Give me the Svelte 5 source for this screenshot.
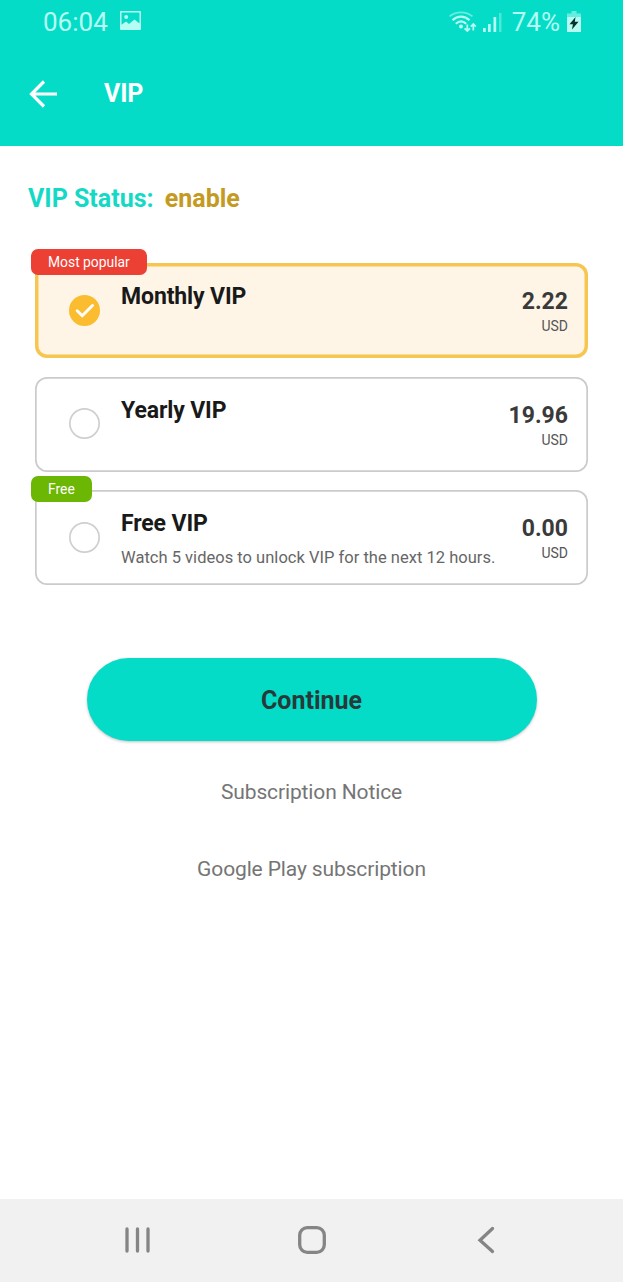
<script lang="ts">
	interface Plan {
		id: string;
		name: string;
		price: string;
		note?: string;
		badge?: string;
		badgeColor?: 'red' | 'green';
	}

	const plans: Plan[] = [
		{ id: 'monthly', name: 'Monthly VIP', price: '2.22', badge: 'Most popular', badgeColor: 'red' },
		{ id: 'yearly', name: 'Yearly VIP', price: '19.96' },
		{
			id: 'free',
			name: 'Free VIP',
			price: '0.00',
			note: 'Watch 5 videos to unlock VIP for the next 12 hours.',
			badge: 'Free',
			badgeColor: 'green'
		}
	];

	let selected = $state('monthly');
</script>

<div class="screen">
	<header>
		<div class="status-bar">
			<span class="clock">06:04</span>
			<svg class="picture" width="21" height="19" viewBox="0 0 21 19">
				<path
					fill="currentColor"
					fill-rule="evenodd"
					d="M1 0h19a1 1 0 0 1 1 1v17a1 1 0 0 1-1 1H1a1 1 0 0 1-1-1V1a1 1 0 0 1 1-1zM1.5 1.5v12.3L6 10.5l3 2.4 5.5-4.4 5 4V1.5z"
				/>
				<circle cx="6.2" cy="6" r="2" fill="currentColor" />
			</svg>
			<div class="indicators">
				<svg width="28" height="22" viewBox="0 0 28 22" fill="none" stroke="currentColor">
					<path d="M.5 5.4C7 0 17 0 23.500 5.400" stroke-width="1.8" opacity=".55" />
					<path d="M3.5 9.2c5-4.800 12-4.800 17 0" stroke-width="2.2" />
					<path d="M6.8 12.8c3.200-3 7.200-3 10.400 0" stroke-width="2.2" />
					<circle cx="12" cy="15.6" r="2" fill="currentColor" stroke="none" />
					<path
						d="M18.3 13.5V20m-2.700-2.700 2.700 2.700 2.700-2.700M24.300 19.500V13m-2.500 2.700 2.500-2.700 2.500 2.700"
						stroke-width="1.8"
					/>
				</svg>
				<svg class="signal" width="19" height="20" viewBox="0 0 19 20" fill="currentColor">
					<rect x="0" y="16" width="2.7" height="4" />
					<rect x="5" y="12" width="2.7" height="8" />
					<rect x="10.5" y="5" width="2.7" height="15" />
					<rect x="16" y="1" width="2.5" height="19" opacity=".4" />
				</svg>
				<span class="percent">74%</span>
				<svg width="14" height="21" viewBox="0 0 14 21">
					<path d="M4.5 0h5v2.5H14V8H0V2.5h4.5z" fill="currentColor" opacity=".55" />
					<path d="M0 6h14v15H0z" fill="currentColor" />
					<path d="M8.5 6 2.5 13.2h3.4L5 18.5l6.5-7.7H7.8z" fill="#07332f" />
				</svg>
			</div>
		</div>
		<div class="toolbar">
			<svg width="29" height="28" viewBox="0 0 29 28" fill="none" stroke="#fff" stroke-width="3.2">
				<path d="M28 14H3M15 1.5 2.5 14 15 26.5" />
			</svg>
			<h1>VIP</h1>
		</div>
	</header>

	<main>
		<p class="vip-status">VIP Status: <span class="state">enable</span></p>

		<div class="plans">
			{#each plans as plan (plan.id)}
				<button
					class="plan"
					class:active={selected === plan.id}
					onclick={() => (selected = plan.id)}
				>
					{#if plan.badge}
						<span class="badge {plan.badgeColor}">{plan.badge}</span>
					{/if}
					<span class="radio">
						{#if selected === plan.id}
							<svg width="31" height="31" viewBox="0 0 31 31" fill="none">
								<circle cx="15.5" cy="15.5" r="15.5" fill="#fbbc2f" />
								<path
									d="m8.2 15.8 5 5L23.5 10.5"
									stroke="#fff"
									stroke-width="3"
									stroke-linecap="round"
									stroke-linejoin="round"
								/>
							</svg>
						{/if}
					</span>
					<span class="info">
						<span class="name">{plan.name}</span>
						{#if plan.note}
							<span class="note">{plan.note}</span>
						{/if}
					</span>
					<span class="cost">
						<span class="price">{plan.price}</span>
						<span class="currency">USD</span>
					</span>
				</button>
			{/each}
		</div>

		<button class="continue">Continue</button>
		<div class="links">
			<span>Subscription Notice</span>
			<span>Google Play subscription</span>
		</div>
	</main>

	<!-- System navigation -->
	<nav>
		<svg width="28" height="28" viewBox="0 0 28 28">
			<path d="M4 3v22M14.5 3v22M25 3v22" />
		</svg>
		<svg width="28" height="28" viewBox="0 0 28 28">
			<rect x="1.7" y="1.7" width="24.6" height="24.6" rx="7.5" />
		</svg>
		<svg width="28" height="28" viewBox="0 0 28 28">
			<path d="M20.5 2.500 8 14.200 20.500 25.500" />
		</svg>
	</nav>
</div>

<style>
	:global(body) {
		background: #fff;
	}

	.screen {
		display: flex;
		flex-direction: column;
		height: 1282px;
		font-family: Roboto, sans-serif;
		overflow: hidden;
	}

	button {
		font: inherit;
		border: 0;
		padding: 0;
		cursor: pointer;
	}

	/* Header */
	header {
		height: 145.5px;
		flex: none;
		background: #04dcc8;
	}
	.status-bar {
		height: 43px;
		display: flex;
		align-items: center;
		padding: 0 42px 0 43px;
		color: #b6fcf2;
	}
	.clock,
	.percent {
		font-size: 26px;
		line-height: 30px;
	}
	.picture {
		margin-left: 12px;
		margin-bottom: 2px;
	}
	.indicators {
		display: flex;
		align-items: center;
		margin-left: auto;
	}
	.signal {
		margin: 0 10px 0 6px;
	}
	.percent {
		margin-right: 7px;
	}
	.toolbar {
		height: 102px;
		display: flex;
		align-items: center;
		padding-left: 29px;
	}
	h1 {
		margin: 0 0 0 46px;
		font-size: 25px;
		line-height: 30px;
		letter-spacing: -0.2px;
		font-weight: 700;
		color: #fff;
	}

	/* Content */
	main {
		flex: 1;
		display: flex;
		flex-direction: column;
	}
	.vip-status {
		margin: 38.5px 0 0 28px;
		font-size: 25px;
		line-height: 30px;
		font-weight: 700;
		color: #14d9c4;
	}
	.state {
		margin-left: 5px;
		color: #c59a22;
	}
	.plans {
		display: flex;
		flex-direction: column;
		gap: 18.5px;
		margin: 49px 35px 0;
	}
	.plan {
		position: relative;
		display: flex;
		height: 95px;
		text-align: left;
		background: #fff;
		border-radius: 12px;
		box-shadow: inset 0 0 0 1.7px #cbcbcb;
	}
	.plan.active {
		background: #fef5e7;
		box-shadow: inset 0 0 0 3.5px #f7c651;
	}
	.badge {
		position: absolute;
		left: -4px;
		top: -14.5px;
		height: 26px;
		line-height: 26px;
		padding: 0 17px;
		border-radius: 7px;
		font-size: 13.85px;
		color: #fff;
	}
	.badge.red {
		background: #ec4034;
	}
	.badge.green {
		background: #6cb604;
	}
	.radio {
		width: 31px;
		height: 31px;
		margin: 31.5px 21px 0 34px;
		border-radius: 50%;
		box-shadow: inset 0 0 0 1.7px #cfcfcf;
	}
	.active .radio {
		box-shadow: none;
	}
	.radio svg {
		display: block;
	}
	.info {
		flex: 1;
		display: flex;
		flex-direction: column;
		padding-top: 20px;
	}
	.name {
		font-size: 23px;
		line-height: 28px;
		font-weight: 700;
		letter-spacing: -0.12px;
		color: #191919;
	}
	.note {
		margin-top: 10px;
		font-size: 16.5px;
		line-height: 20px;
		letter-spacing: 0.02px;
		color: #666;
		white-space: nowrap;
	}
	.cost {
		display: flex;
		flex-direction: column;
		align-items: flex-end;
		padding: 24px 20px 0 0;
	}
	.price {
		font-size: 23px;
		line-height: 30px;
		font-weight: 700;
		color: #3a3a3a;
	}
	.currency {
		font-size: 14px;
		line-height: 18px;
		color: #555;
	}
	.continue {
		align-self: center;
		width: 450px;
		height: 83px;
		margin-top: 73px;
		padding-top: 2px;
		border-radius: 42px;
		background: #04dcc8;
		box-shadow: 0 1px 3px rgba(0, 0, 0, 0.25);
		font-size: 25px;
		font-weight: 700;
		color: #263a3a;
	}
	.links {
		display: flex;
		flex-direction: column;
		align-items: center;
		gap: 47px;
		margin-top: 36px;
		font-size: 21px;
		line-height: 30px;
		letter-spacing: -0.13px;
		color: #757575;
	}

	/* Navigation bar */
	nav {
		flex: none;
		height: 83px;
		display: flex;
		align-items: center;
		justify-content: space-between;
		box-sizing: border-box;
		padding: 0 123px 2px;
		background: #f1f1f1;
	}
	nav svg {
		fill: none;
		stroke: #858585;
		stroke-width: 3.3;
		stroke-linecap: round;
	}
</style>
